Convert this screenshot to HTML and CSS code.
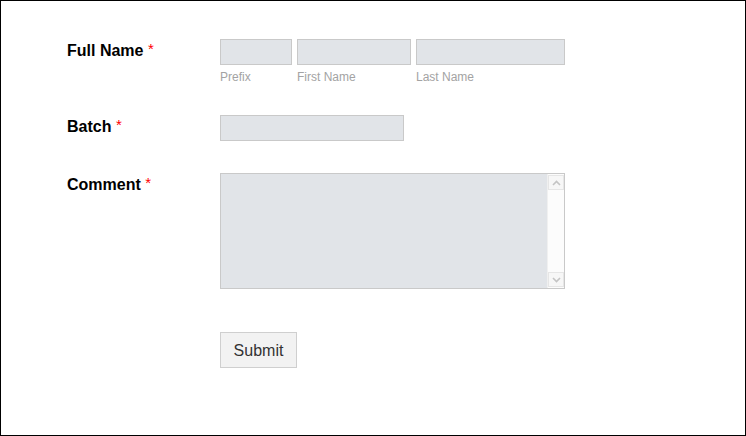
FILE: index.html
```html
<!DOCTYPE html>
<html>
<head>
<meta charset="utf-8">
<link rel="stylesheet" href="styles.css">
</head>
<body>
<div class="frame">
  <form class="form">
    <div class="row row-name">
      <label class="label">Full Name <span class="req">*</span></label>
      <div class="fields">
        <div class="sub sub-prefix">
          <input class="input" type="text">
          <span class="sublabel">Prefix</span>
        </div>
        <div class="sub sub-first">
          <input class="input" type="text">
          <span class="sublabel">First Name</span>
        </div>
        <div class="sub sub-last">
          <input class="input" type="text">
          <span class="sublabel">Last Name</span>
        </div>
      </div>
    </div>
    <div class="row row-batch">
      <label class="label">Batch <span class="req">*</span></label>
      <input class="input input-batch" type="text">
    </div>
    <div class="row row-comment">
      <label class="label">Comment <span class="req">*</span></label>
      <div class="textbox">
        <textarea class="textarea"></textarea>
        <div class="scrollbar">
          <div class="sb-btn">
            <svg width="9" height="6" viewBox="0 0 9 6"><path d="M1 5 L4.5 1.5 L8 5" fill="none" stroke="#c4c4c4" stroke-width="1.6"/></svg>
          </div>
          <div class="sb-track"></div>
          <div class="sb-btn">
            <svg width="9" height="6" viewBox="0 0 9 6"><path d="M1 1 L4.5 4.5 L8 1" fill="none" stroke="#c4c4c4" stroke-width="1.6"/></svg>
          </div>
        </div>
      </div>
    </div>
    <div class="row row-submit">
      <div class="label"></div>
      <button class="button" type="button">Submit</button>
    </div>
  </form>
</div>
</body>
</html>
```

FILE: styles.css
```css
html, body {
  margin: 0;
  padding: 0;
  background: #fff;
}

.frame {
  width: 746px;
  height: 436px;
  box-sizing: border-box;
  border: 1px solid #000;
  font-family: "Liberation Sans", Arial, sans-serif;
}

.form {
  padding: 38px 0 0 66px;
  margin: 0;
}

.row {
  display: flex;
  align-items: flex-start;
}

.row-name { margin-bottom: 30px; }
.row-batch { margin-bottom: 32px; }
.row-comment { margin-bottom: 43px; }

.label {
  width: 153px;
  flex: none;
  padding-top: 3px;
  font-size: 16px;
  line-height: 18px;
  font-weight: bold;
  color: #000;
}

.req {
  color: #f00;
  font-weight: normal;
  font-size: 15px;
  position: relative;
  top: -2px;
}

.fields {
  display: flex;
  gap: 5px;
}

.sub {
  display: flex;
  flex-direction: column;
}

.sub-prefix { width: 72px; }
.sub-first { width: 114px; }
.sub-last { width: 149px; }

.input {
  display: block;
  box-sizing: border-box;
  width: 100%;
  height: 26px;
  margin: 0;
  border: 1px solid #c9c9c9;
  background: #e1e4e8;
  padding: 0 4px;
  font-family: inherit;
  font-size: 13px;
}

.input-batch {
  width: 184px;
}

.sublabel {
  margin-top: 5px;
  font-size: 12px;
  line-height: 15px;
  color: #a3a3a3;
}

.textbox {
  display: flex;
  box-sizing: border-box;
  width: 345px;
  height: 116px;
  border: 1px solid #c9c9c9;
  background: #e1e4e8;
}

.textarea {
  flex: 1;
  border: none;
  background: transparent;
  resize: none;
  margin: 0;
  padding: 4px;
  outline: none;
}

.scrollbar {
  width: 16px;
  flex: none;
  display: flex;
  flex-direction: column;
  background: #fcfcfc;
  border-left: 1px solid #f0f0f0;
  padding: 1px 0;
}

.sb-btn {
  height: 15px;
  box-sizing: border-box;
  border: 1px solid #e6e6e6;
  background: #f7f7f7;
  display: flex;
  align-items: center;
  justify-content: center;
}

.sb-track {
  flex: 1;
}

.button {
  box-sizing: border-box;
  width: 77px;
  height: 36px;
  margin: 0;
  border: 1px solid #cfcfcf;
  background: #f2f2f2;
  color: #333;
  font-family: "Liberation Sans", Arial, sans-serif;
  font-size: 16px;
  padding: 1px 0 0;
}
```
